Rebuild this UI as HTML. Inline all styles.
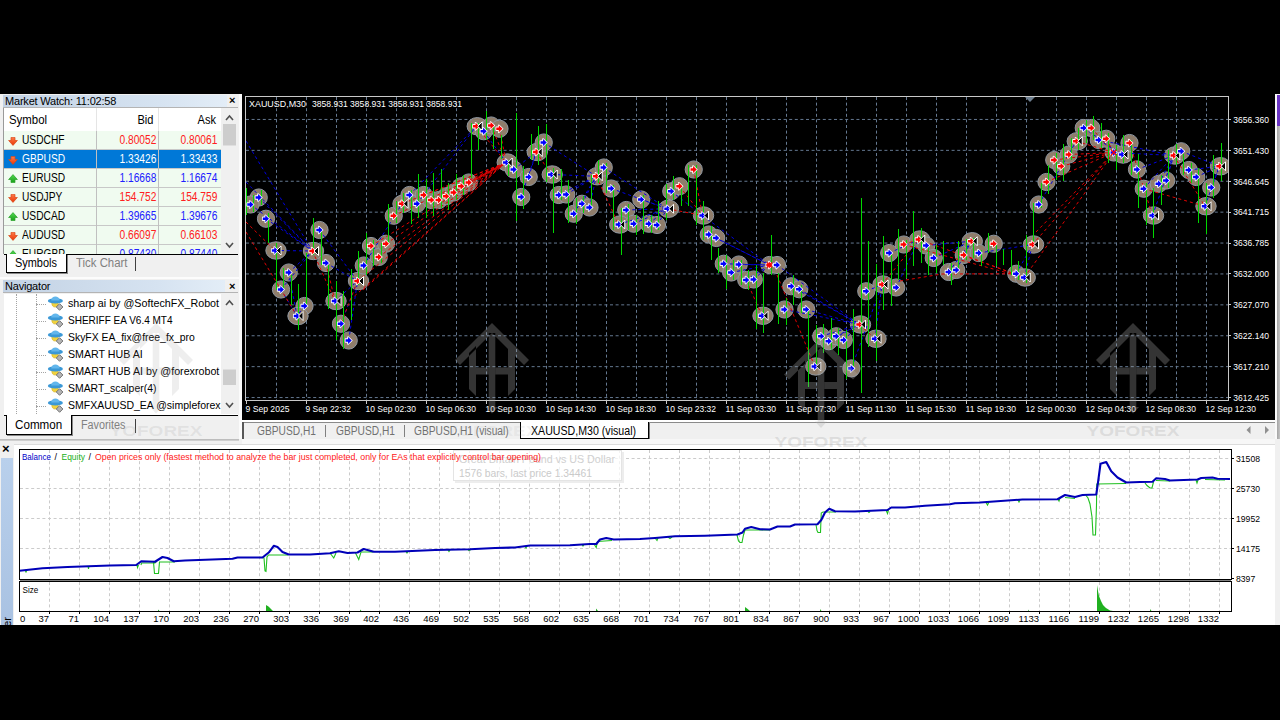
<!DOCTYPE html><html><head><meta charset="utf-8"><title>MetaTrader 4</title><style>
*{box-sizing:border-box;margin:0;padding:0}
html,body{width:1280px;height:720px;overflow:hidden;background:#000;font-family:"Liberation Sans",sans-serif;font-size:12px;color:#000}
.a{position:absolute}
#app{position:absolute;left:0;top:94px;width:1280px;height:531px;background:#f0f0f0;overflow:hidden}
.title{position:absolute;left:3px;height:13px;width:224px;letter-spacing:-0.2px;background:linear-gradient(90deg,#c3d2e4,#d6e3f1 70%,#e3edf7);font-size:11px;line-height:13px;padding-left:2px;color:#000;white-space:nowrap}
.cls{position:absolute;font-size:11px;font-weight:bold;line-height:12px}
.row{position:absolute;left:4px;width:217px;height:19px;background:#f0fbf0;border-bottom:1px solid #c8c8c8;font-size:12px;line-height:18px;white-space:nowrap}
.row span{position:absolute;top:0}
.row .s{left:18.3px}
.row .b{right:65px;text-align:right}
.row .k{right:4px;text-align:right}
.row i{position:absolute;top:0;width:1px;height:19px;background:#c0c0c0}
.up{color:#2020ff}.dn{color:#ff2020}
.sel{background:#0078d7;color:#fff}
span.sx,.sx{display:inline-block;transform:scaleX(.85);transform-origin:0 50%}
span.sxr,.sxr{display:inline-block;transform:scaleX(.85);transform-origin:100% 50%}
.tab{position:absolute;font-size:12px;line-height:16px;white-space:nowrap}
.nav{position:absolute;left:69px;font-size:11.5px;line-height:17px;white-space:nowrap;color:#000}
</style></head><body>
<div id="app">
<div class="a" style="left:0;top:0;width:242px;height:345px;background:#f0f0f0"></div>
<div class="a" style="left:239px;top:0;width:3px;height:345px;background:#fbfbfb"></div>
<div class="title" style="top:1px;height:12px;line-height:12px">Market Watch: 11:02:58</div>
<div class="a" style="left:3px;top:13px;width:235px;height:1px;background:#b4b4b4"></div>
<div class="cls" style="left:229px;top:0px">×</div>
<div class="a" style="left:4px;top:14px;width:217px;height:146px;background:#fff;overflow:hidden">
</div>
<div class="a" style="left:4px;top:14px;width:217px;height:23px;background:#fff;font-size:12px;line-height:24px"><span class="a sx" style="left:5px;transform:scaleX(.95)">Symbol</span><span class="a sxr" style="right:68px;transform:scaleX(.92)">Bid</span><span class="a sxr" style="right:4.5px;transform:scaleX(.92)">Ask</span><i class="a" style="left:92px;top:0;width:1px;height:23px;background:#e5e5e5"></i><i class="a" style="left:154px;top:0;width:1px;height:23px;background:#e5e5e5"></i></div>
<svg width="0" height="0" style="position:absolute"><defs><linearGradient id="gdn" x1="0" y1="0" x2="0" y2="1"><stop offset="0" stop-color="#ff7a48"/><stop offset="1" stop-color="#e83808"/></linearGradient><linearGradient id="gup" x1="0" y1="0" x2="0" y2="1"><stop offset="0" stop-color="#50d850"/><stop offset="1" stop-color="#18a018"/></linearGradient></defs></svg>
<div class="a" style="left:0;top:37px;width:242px;height:123px;overflow:hidden">
<div class="row" style="top:0px"><svg class="a" style="left:4px;top:5.5px" width="10" height="9" viewBox="0 0 10 9"><path d="M3 0.4h4v3.1h2.4L5 8.4 0.6 3.5H3z" fill="url(#gdn)" stroke="#d84818" stroke-width="0.7"/></svg><span class="s sx">USDCHF</span><span class="b sxr dn">0.80052</span><span class="k sxr dn">0.80061</span><i style="left:92px"></i><i style="left:154px"></i></div>
<div class="row sel" style="top:19px"><svg class="a" style="left:4px;top:5.5px" width="10" height="9" viewBox="0 0 10 9"><path d="M3 0.4h4v3.1h2.4L5 8.4 0.6 3.5H3z" fill="url(#gdn)" stroke="#d84818" stroke-width="0.7"/></svg><span class="s sx">GBPUSD</span><span class="b sxr">1.33426</span><span class="k sxr">1.33433</span><i style="left:92px"></i><i style="left:154px"></i></div>
<div class="row" style="top:38px"><svg class="a" style="left:4px;top:5px" width="10" height="9" viewBox="0 0 10 9"><path d="M3 8.6h4V5.5h2.4L5 0.6 0.6 5.5H3z" fill="url(#gup)" stroke="#28a028" stroke-width="0.7"/></svg><span class="s sx">EURUSD</span><span class="b sxr up">1.16668</span><span class="k sxr up">1.16674</span><i style="left:92px"></i><i style="left:154px"></i></div>
<div class="row" style="top:57px"><svg class="a" style="left:4px;top:5.5px" width="10" height="9" viewBox="0 0 10 9"><path d="M3 0.4h4v3.1h2.4L5 8.4 0.6 3.5H3z" fill="url(#gdn)" stroke="#d84818" stroke-width="0.7"/></svg><span class="s sx">USDJPY</span><span class="b sxr dn">154.752</span><span class="k sxr dn">154.759</span><i style="left:92px"></i><i style="left:154px"></i></div>
<div class="row" style="top:76px"><svg class="a" style="left:4px;top:5px" width="10" height="9" viewBox="0 0 10 9"><path d="M3 8.6h4V5.5h2.4L5 0.6 0.6 5.5H3z" fill="url(#gup)" stroke="#28a028" stroke-width="0.7"/></svg><span class="s sx">USDCAD</span><span class="b sxr up">1.39665</span><span class="k sxr up">1.39676</span><i style="left:92px"></i><i style="left:154px"></i></div>
<div class="row" style="top:95px"><svg class="a" style="left:4px;top:5.5px" width="10" height="9" viewBox="0 0 10 9"><path d="M3 0.4h4v3.1h2.4L5 8.4 0.6 3.5H3z" fill="url(#gdn)" stroke="#d84818" stroke-width="0.7"/></svg><span class="s sx">AUDUSD</span><span class="b sxr dn">0.66097</span><span class="k sxr dn">0.66103</span><i style="left:92px"></i><i style="left:154px"></i></div>
<div class="row" style="top:114px"><svg class="a" style="left:4px;top:5px" width="10" height="9" viewBox="0 0 10 9"><path d="M3 8.6h4V5.5h2.4L5 0.6 0.6 5.5H3z" fill="url(#gup)" stroke="#28a028" stroke-width="0.7"/></svg><span class="s sx">EURGBP</span><span class="b sxr up">0.87430</span><span class="k sxr up">0.87440</span><i style="left:92px"></i><i style="left:154px"></i></div>
</div>
<div class="a" style="left:3px;top:14px;width:1px;height:146px;background:#9a9a9a"></div>
<div class="a" style="left:221px;top:14px;width:17px;height:146px;background:#f0f0f0"></div>
<svg class="a" style="left:221px;top:14px" width="17" height="146"><path d="M5 12l3.5-4 3.5 4" fill="none" stroke="#505050" stroke-width="1.6"/><rect x="2" y="16" width="13" height="21.5" fill="#cdcdcd"/><path d="M5 135l3.5 4 3.5-4" fill="none" stroke="#505050" stroke-width="1.6"/></svg>
<div class="a" style="left:4px;top:160px;width:234px;height:1px;background:#000"></div>
<div class="a" style="left:6px;top:160px;width:61px;height:19px;background:#fff;border:1px solid #000;border-top:none;box-shadow:1px 1px 0 #888"></div>
<div class="tab" style="left:15px;top:161px"><span class="sx" style="transform:scaleX(.91)">Symbols</span></div>
<div class="tab" style="left:76px;top:161px;color:#808080"><span class="sx" style="transform:scaleX(.95)">Tick Chart</span></div>
<div class="a" style="left:135px;top:163px;width:1px;height:14px;background:#404040"></div>
<div class="a" style="left:0;top:183px;width:242px;height:2px;background:#fcfcfc"></div>
<div class="title" style="top:186px;height:12px;line-height:12px;width:222px">Navigator</div>
<div class="a" style="left:3px;top:198px;width:235px;height:1px;background:#b4b4b4"></div>
<div class="cls" style="left:229px;top:186px">×</div>
<div class="a" style="left:4px;top:200px;width:234px;height:121px;background:#fff;overflow:hidden">
<div class="a" style="left:12px;top:0;width:0;height:120px;border-left:1px dotted #a4a4a4"></div>
<div class="a" style="left:32px;top:0;width:0;height:120px;border-left:1px dotted #a4a4a4"></div>
<div class="a" style="left:32px;top:10px;width:10px;height:0;border-top:1px dotted #a4a4a4"></div>
<svg class="a" style="left:43px;top:1px" width="18" height="17" viewBox="0 0 18 17"><path d="M4.7 7.5h6.6c0 3-1.4 4.6-3.3 4.6s-3.3-1.6-3.3-4.6z" fill="#f2d23c" stroke="#c8a418" stroke-width="0.5"/><ellipse cx="8.4" cy="5.9" rx="7.5" ry="2.6" fill="#3b98d6"/><path d="M4.2 5.6c0-5.6 8.4-5.6 8.4 0z" fill="#62b6ec"/><path d="M9.3 12l3.3-3.3 3.3 3.3-3.3 3.3z" fill="#b4b4b4" stroke="#686868" stroke-width="0.9"/></svg>
<div class="nav" style="left:64px;top:1px;width:153px;overflow:hidden"><span class="sx" style="transform:scaleX(0.933)">sharp ai by @SoftechFX_Robot</span></div>
<div class="a" style="left:32px;top:27px;width:10px;height:0;border-top:1px dotted #a4a4a4"></div>
<svg class="a" style="left:43px;top:18px" width="18" height="17" viewBox="0 0 18 17"><path d="M4.7 7.5h6.6c0 3-1.4 4.6-3.3 4.6s-3.3-1.6-3.3-4.6z" fill="#f2d23c" stroke="#c8a418" stroke-width="0.5"/><ellipse cx="8.4" cy="5.9" rx="7.5" ry="2.6" fill="#3b98d6"/><path d="M4.2 5.6c0-5.6 8.4-5.6 8.4 0z" fill="#62b6ec"/><path d="M9.3 12l3.3-3.3 3.3 3.3-3.3 3.3z" fill="#b4b4b4" stroke="#686868" stroke-width="0.9"/></svg>
<div class="nav" style="left:64px;top:18px;width:153px;overflow:hidden"><span class="sx" style="transform:scaleX(0.87)">SHERIFF EA V6.4 MT4</span></div>
<div class="a" style="left:32px;top:44px;width:10px;height:0;border-top:1px dotted #a4a4a4"></div>
<svg class="a" style="left:43px;top:35px" width="18" height="17" viewBox="0 0 18 17"><path d="M4.7 7.5h6.6c0 3-1.4 4.6-3.3 4.6s-3.3-1.6-3.3-4.6z" fill="#f2d23c" stroke="#c8a418" stroke-width="0.5"/><ellipse cx="8.4" cy="5.9" rx="7.5" ry="2.6" fill="#3b98d6"/><path d="M4.2 5.6c0-5.6 8.4-5.6 8.4 0z" fill="#62b6ec"/><path d="M9.3 12l3.3-3.3 3.3 3.3-3.3 3.3z" fill="#b4b4b4" stroke="#686868" stroke-width="0.9"/></svg>
<div class="nav" style="left:64px;top:35px;width:153px;overflow:hidden"><span class="sx" style="transform:scaleX(0.905)">SkyFX EA_fix@free_fx_pro</span></div>
<div class="a" style="left:32px;top:61px;width:10px;height:0;border-top:1px dotted #a4a4a4"></div>
<svg class="a" style="left:43px;top:52px" width="18" height="17" viewBox="0 0 18 17"><path d="M4.7 7.5h6.6c0 3-1.4 4.6-3.3 4.6s-3.3-1.6-3.3-4.6z" fill="#f2d23c" stroke="#c8a418" stroke-width="0.5"/><ellipse cx="8.4" cy="5.9" rx="7.5" ry="2.6" fill="#3b98d6"/><path d="M4.2 5.6c0-5.6 8.4-5.6 8.4 0z" fill="#62b6ec"/><path d="M9.3 12l3.3-3.3 3.3 3.3-3.3 3.3z" fill="#b4b4b4" stroke="#686868" stroke-width="0.9"/></svg>
<div class="nav" style="left:64px;top:52px;width:153px;overflow:hidden"><span class="sx" style="transform:scaleX(0.925)">SMART HUB AI</span></div>
<div class="a" style="left:32px;top:78px;width:10px;height:0;border-top:1px dotted #a4a4a4"></div>
<svg class="a" style="left:43px;top:69px" width="18" height="17" viewBox="0 0 18 17"><path d="M4.7 7.5h6.6c0 3-1.4 4.6-3.3 4.6s-3.3-1.6-3.3-4.6z" fill="#f2d23c" stroke="#c8a418" stroke-width="0.5"/><ellipse cx="8.4" cy="5.9" rx="7.5" ry="2.6" fill="#3b98d6"/><path d="M4.2 5.6c0-5.6 8.4-5.6 8.4 0z" fill="#62b6ec"/><path d="M9.3 12l3.3-3.3 3.3 3.3-3.3 3.3z" fill="#b4b4b4" stroke="#686868" stroke-width="0.9"/></svg>
<div class="nav" style="left:64px;top:69px;width:153px;overflow:hidden"><span class="sx" style="transform:scaleX(0.93)">SMART HUB AI by @forexrobot</span></div>
<div class="a" style="left:32px;top:95px;width:10px;height:0;border-top:1px dotted #a4a4a4"></div>
<svg class="a" style="left:43px;top:86px" width="18" height="17" viewBox="0 0 18 17"><path d="M4.7 7.5h6.6c0 3-1.4 4.6-3.3 4.6s-3.3-1.6-3.3-4.6z" fill="#f2d23c" stroke="#c8a418" stroke-width="0.5"/><ellipse cx="8.4" cy="5.9" rx="7.5" ry="2.6" fill="#3b98d6"/><path d="M4.2 5.6c0-5.6 8.4-5.6 8.4 0z" fill="#62b6ec"/><path d="M9.3 12l3.3-3.3 3.3 3.3-3.3 3.3z" fill="#b4b4b4" stroke="#686868" stroke-width="0.9"/></svg>
<div class="nav" style="left:64px;top:86px;width:153px;overflow:hidden"><span class="sx" style="transform:scaleX(0.906)">SMART_scalper(4)</span></div>
<div class="a" style="left:32px;top:112px;width:10px;height:0;border-top:1px dotted #a4a4a4"></div>
<svg class="a" style="left:43px;top:103px" width="18" height="17" viewBox="0 0 18 17"><path d="M4.7 7.5h6.6c0 3-1.4 4.6-3.3 4.6s-3.3-1.6-3.3-4.6z" fill="#f2d23c" stroke="#c8a418" stroke-width="0.5"/><ellipse cx="8.4" cy="5.9" rx="7.5" ry="2.6" fill="#3b98d6"/><path d="M4.2 5.6c0-5.6 8.4-5.6 8.4 0z" fill="#62b6ec"/><path d="M9.3 12l3.3-3.3 3.3 3.3-3.3 3.3z" fill="#b4b4b4" stroke="#686868" stroke-width="0.9"/></svg>
<div class="nav" style="left:64px;top:103px;width:153px;overflow:hidden"><span class="sx" style="transform:scaleX(0.914)">SMFXAUUSD_EA @simpleforex</span></div>
<div class="a" style="left:32px;top:129px;width:10px;height:0;border-top:1px dotted #a4a4a4"></div>
<svg class="a" style="left:43px;top:120px" width="18" height="17" viewBox="0 0 18 17"><path d="M4.7 7.5h6.6c0 3-1.4 4.6-3.3 4.6s-3.3-1.6-3.3-4.6z" fill="#f2d23c" stroke="#c8a418" stroke-width="0.5"/><ellipse cx="8.4" cy="5.9" rx="7.5" ry="2.6" fill="#3b98d6"/><path d="M4.2 5.6c0-5.6 8.4-5.6 8.4 0z" fill="#62b6ec"/><path d="M9.3 12l3.3-3.3 3.3 3.3-3.3 3.3z" fill="#b4b4b4" stroke="#686868" stroke-width="0.9"/></svg>
<div class="a" style="left:217px;top:0;width:17px;height:120px;background:#f0f0f0"></div>
<svg class="a" style="left:217px;top:0" width="17" height="120"><path d="M5 11l3.5-4 3.5 4" fill="none" stroke="#505050" stroke-width="1.6"/><rect x="2" y="75.5" width="13" height="15.5" fill="#cdcdcd"/><path d="M5 109l3.5 4 3.5-4" fill="none" stroke="#505050" stroke-width="1.6"/></svg>
</div>
<div class="a" style="left:4px;top:321px;width:234px;height:1px;background:#000"></div>
<div class="a" style="left:6px;top:321px;width:66px;height:20px;background:#fff;border:1px solid #000;border-top:none;box-shadow:1px 1px 0 #888"></div>
<div class="tab" style="left:15px;top:323px"><span class="sx" style="transform:scaleX(.97)">Common</span></div>
<div class="tab" style="left:81px;top:323px;color:#808080"><span class="sx" style="transform:scaleX(.9)">Favorites</span></div>
<div class="a" style="left:135px;top:325px;width:1px;height:14px;background:#404040"></div>
<div class="a" style="left:242px;top:0;width:1033px;height:326px;background:#000"></div>
<div class="a" style="left:1275px;top:0;width:5px;height:345px;background:#fafafa"></div>
<div class="a" style="left:1277px;top:1px;width:3px;height:31px;background:#6a34c4"></div>
<div class="a" style="left:1277px;top:32px;width:3px;height:313px;background:linear-gradient(90deg,#a4a4a4,#c4c4c4)"></div>
<div class="a" style="left:242px;top:326px;width:1033px;height:2px;background:#fff"></div>
<div class="a" style="left:243px;top:328px;width:1032px;height:1px;background:#8a8a8a"></div>
<div class="a" style="left:242px;top:329px;width:1033px;height:16px;background:#f0f0f0"></div>
<div class="a" style="left:242px;top:328px;width:1.5px;height:17px;background:#585858"></div>
<div class="tab" style="left:257px;top:329px;color:#707070"><span class="sx" style="transform:scaleX(.85)">GBPUSD,H1</span></div>
<div class="a" style="left:325px;top:331px;width:1px;height:12px;background:#808080"></div>
<div class="tab" style="left:336px;top:329px;color:#707070"><span class="sx" style="transform:scaleX(.85)">GBPUSD,H1</span></div>
<div class="a" style="left:404px;top:331px;width:1px;height:12px;background:#808080"></div>
<div class="tab" style="left:414px;top:329px;color:#707070"><span class="sx" style="transform:scaleX(.85)">GBPUSD,H1 (visual)</span></div>
<div class="a" style="left:520px;top:328px;width:129px;height:17px;background:#fff;border:1px solid #000;border-top:none;box-shadow:1px 1px 0 #777"></div>
<div class="tab" style="left:531px;top:329px;color:#000"><span class="sx" style="transform:scaleX(.885)">XAUUSD,M30 (visual)</span></div>
<svg class="a" style="left:1240px;top:330px" width="30" height="12"><path d="M10.5 2v8L6.5 6z" fill="#909090"/><path d="M25 2v8l4-4z" fill="#909090"/></svg>
<div class="a" style="left:0;top:345px;width:1280px;height:6px;background:#f0f0f0"></div>
<div class="a" style="left:0;top:345px;width:239px;height:2px;background:linear-gradient(180deg,#b4b4b4,#d8d8d8)"></div>
<div class="a" style="left:242px;top:345px;width:1033px;height:5px;background:#f7f7f7"></div>
<div class="a" style="left:0;top:350px;width:1280px;height:181px;background:#f0f0f0"></div>
<div class="a" style="left:14px;top:350px;width:1261px;height:181px;background:#fff;border-top:1px solid #dcdcdc"></div>
<div class="a" style="left:1px;top:364px;width:12px;height:167px;background:linear-gradient(180deg,#b9d0ec,#a9c2e2)"></div>
<div class="cls" style="left:2px;top:349px;font-size:13px">×</div>
</div>
<svg class="a" style="left:0;top:0;pointer-events:none" width="1280" height="720" viewBox="0 0 1280 720" font-family="Liberation Sans, sans-serif">
<g stroke="#647890" stroke-width="1" stroke-dasharray="3 2.6">
<path d="M276.5 97V400"/>
<path d="M306.5 97V400"/>
<path d="M336.5 97V400"/>
<path d="M366.5 97V400"/>
<path d="M396.5 97V400"/>
<path d="M426.5 97V400"/>
<path d="M456.5 97V400"/>
<path d="M486.5 97V400"/>
<path d="M516.5 97V400"/>
<path d="M546.5 97V400"/>
<path d="M576.5 97V400"/>
<path d="M606.5 97V400"/>
<path d="M636.5 97V400"/>
<path d="M666.5 97V400"/>
<path d="M696.5 97V400"/>
<path d="M726.5 97V400"/>
<path d="M756.5 97V400"/>
<path d="M786.5 97V400"/>
<path d="M816.5 97V400"/>
<path d="M846.5 97V400"/>
<path d="M876.5 97V400"/>
<path d="M906.5 97V400"/>
<path d="M936.5 97V400"/>
<path d="M966.5 97V400"/>
<path d="M996.5 97V400"/>
<path d="M1026.5 97V400"/>
<path d="M1056.5 97V400"/>
<path d="M1086.5 97V400"/>
<path d="M1116.5 97V400"/>
<path d="M1146.5 97V400"/>
<path d="M1176.5 97V400"/>
<path d="M1206.5 97V400"/>
<path d="M246 119.45H1228"/>
<path d="M246 150.35H1228"/>
<path d="M246 181.25H1228"/>
<path d="M246 212.15H1228"/>
<path d="M246 243.05H1228"/>
<path d="M246 273.95H1228"/>
<path d="M246 304.85H1228"/>
<path d="M246 335.75H1228"/>
<path d="M246 366.65H1228"/>
<path d="M246 397.55H1228"/>
</g>
<rect x="245.5" y="96.5" width="983" height="304" fill="none" stroke="#c8c8c8" stroke-width="1" shape-rendering="crispEdges"/>
<g stroke="#c8c8c8" stroke-width="1" shape-rendering="crispEdges">
<path d="M1229 119.5h2"/>
<path d="M1229 150.5h2"/>
<path d="M1229 181.5h2"/>
<path d="M1229 212.5h2"/>
<path d="M1229 243.5h2"/>
<path d="M1229 273.5h2"/>
<path d="M1229 304.5h2"/>
<path d="M1229 335.5h2"/>
<path d="M1229 366.5h2"/>
<path d="M1229 397.5h2"/>
<path d="M246.5 401v3"/>
<path d="M306.5 401v3"/>
<path d="M366.5 401v3"/>
<path d="M426.5 401v3"/>
<path d="M486.5 401v3"/>
<path d="M546.5 401v3"/>
<path d="M606.5 401v3"/>
<path d="M666.5 401v3"/>
<path d="M726.5 401v3"/>
<path d="M786.5 401v3"/>
<path d="M846.5 401v3"/>
<path d="M906.5 401v3"/>
<path d="M966.5 401v3"/>
<path d="M1026.5 401v3"/>
<path d="M1086.5 401v3"/>
<path d="M1146.5 401v3"/>
<path d="M1206.5 401v3"/>
</g>
<g fill="#fff" font-size="9.5px">
<text x="1233.3" y="122.75" textLength="35.6" lengthAdjust="spacingAndGlyphs">3656.360</text>
<text x="1233.3" y="153.65" textLength="35.6" lengthAdjust="spacingAndGlyphs">3651.430</text>
<text x="1233.3" y="184.55" textLength="35.6" lengthAdjust="spacingAndGlyphs">3646.645</text>
<text x="1233.3" y="215.45" textLength="35.6" lengthAdjust="spacingAndGlyphs">3641.715</text>
<text x="1233.3" y="246.35" textLength="35.6" lengthAdjust="spacingAndGlyphs">3636.785</text>
<text x="1233.3" y="277.25" textLength="35.6" lengthAdjust="spacingAndGlyphs">3632.000</text>
<text x="1233.3" y="308.15" textLength="35.6" lengthAdjust="spacingAndGlyphs">3627.070</text>
<text x="1233.3" y="339.05" textLength="35.6" lengthAdjust="spacingAndGlyphs">3622.140</text>
<text x="1233.3" y="369.95" textLength="35.6" lengthAdjust="spacingAndGlyphs">3617.210</text>
<text x="1233.3" y="400.85" textLength="35.6" lengthAdjust="spacingAndGlyphs">3612.425</text>
</g>
<g fill="#fff" font-size="9.5px">
<text x="245.5" y="412.3" textLength="44" lengthAdjust="spacingAndGlyphs">9 Sep 2025</text>
<text x="305.5" y="412.3" textLength="45.5" lengthAdjust="spacingAndGlyphs">9 Sep 22:32</text>
<text x="365.5" y="412.3" textLength="50.5" lengthAdjust="spacingAndGlyphs">10 Sep 02:30</text>
<text x="425.5" y="412.3" textLength="50.5" lengthAdjust="spacingAndGlyphs">10 Sep 06:30</text>
<text x="485.5" y="412.3" textLength="50.5" lengthAdjust="spacingAndGlyphs">10 Sep 10:30</text>
<text x="545.5" y="412.3" textLength="50.5" lengthAdjust="spacingAndGlyphs">10 Sep 14:30</text>
<text x="605.5" y="412.3" textLength="50.5" lengthAdjust="spacingAndGlyphs">10 Sep 18:30</text>
<text x="665.5" y="412.3" textLength="50.5" lengthAdjust="spacingAndGlyphs">10 Sep 23:32</text>
<text x="725.5" y="412.3" textLength="50.5" lengthAdjust="spacingAndGlyphs">11 Sep 03:30</text>
<text x="785.5" y="412.3" textLength="50.5" lengthAdjust="spacingAndGlyphs">11 Sep 07:30</text>
<text x="845.5" y="412.3" textLength="50.5" lengthAdjust="spacingAndGlyphs">11 Sep 11:30</text>
<text x="905.5" y="412.3" textLength="50.5" lengthAdjust="spacingAndGlyphs">11 Sep 15:30</text>
<text x="965.5" y="412.3" textLength="50.5" lengthAdjust="spacingAndGlyphs">11 Sep 19:30</text>
<text x="1025.5" y="412.3" textLength="50.5" lengthAdjust="spacingAndGlyphs">12 Sep 00:30</text>
<text x="1085.5" y="412.3" textLength="50.5" lengthAdjust="spacingAndGlyphs">12 Sep 04:30</text>
<text x="1145.5" y="412.3" textLength="50.5" lengthAdjust="spacingAndGlyphs">12 Sep 08:30</text>
<text x="1205.5" y="412.3" textLength="50.5" lengthAdjust="spacingAndGlyphs">12 Sep 12:30</text>
</g>
<text x="249" y="107" fill="#fff" font-size="9.5px" textLength="57" lengthAdjust="spacingAndGlyphs">XAUUSD,M30</text>
<text x="312" y="107" fill="#fff" font-size="9.5px" textLength="150" lengthAdjust="spacingAndGlyphs">3858.931 3858.931 3858.931 3858.931</text>
<path d="M1025 97h10l-5 5z" fill="#6e7f90"/>
<clipPath id="cc"><rect x="246" y="97" width="982" height="303"/></clipPath><g clip-path="url(#cc)">
<g fill="#8f7d6b" stroke="#9098a2" stroke-width="1">
<circle cx="258.75" cy="197.5" r="8.6"/>
<circle cx="250.5" cy="204.5" r="8.6"/>
<circle cx="266" cy="218.75" r="8.6"/>
<circle cx="319.5" cy="230" r="8.6"/>
<ellipse cx="276" cy="250.5" rx="10.2" ry="8.7"/>
<ellipse cx="313.5" cy="251" rx="10.2" ry="8.7"/>
<circle cx="326" cy="263" r="8.6"/>
<circle cx="288.75" cy="272.5" r="8.6"/>
<circle cx="281" cy="289.5" r="8.6"/>
<circle cx="304.5" cy="306" r="8.6"/>
<ellipse cx="298" cy="316" rx="10.2" ry="8.7"/>
<ellipse cx="336" cy="301" rx="10.2" ry="8.7"/>
<circle cx="341" cy="323.75" r="8.6"/>
<circle cx="348.75" cy="340.5" r="8.6"/>
<ellipse cx="358.5" cy="281" rx="10.2" ry="8.7"/>
<circle cx="363.75" cy="265.5" r="8.6"/>
<circle cx="371" cy="246" r="8.6"/>
<circle cx="378.75" cy="257" r="8.6"/>
<circle cx="386" cy="243.75" r="8.6"/>
<circle cx="393.75" cy="215.75" r="8.6"/>
<ellipse cx="403" cy="203.75" rx="10.2" ry="8.7"/>
<circle cx="409.5" cy="195" r="8.6"/>
<circle cx="417" cy="203.75" r="8.6"/>
<circle cx="423.75" cy="195" r="8.6"/>
<circle cx="431.25" cy="200" r="8.6"/>
<circle cx="438.75" cy="200" r="8.6"/>
<circle cx="446.25" cy="196.25" r="8.6"/>
<circle cx="453.75" cy="192.5" r="8.6"/>
<circle cx="461.25" cy="186.25" r="8.6"/>
<circle cx="468.75" cy="182.5" r="8.6"/>
<ellipse cx="477.25" cy="126.25" rx="10.2" ry="8.7"/>
<circle cx="483.75" cy="131.25" r="8.6"/>
<circle cx="491.25" cy="125.5" r="8.6"/>
<circle cx="499.5" cy="128.75" r="8.6"/>
<ellipse cx="507.25" cy="162.5" rx="10.2" ry="8.7"/>
<circle cx="513.75" cy="169.5" r="8.6"/>
<circle cx="528.75" cy="177" r="8.6"/>
<circle cx="521.25" cy="197" r="8.6"/>
<ellipse cx="537.25" cy="152" rx="10.2" ry="8.7"/>
<circle cx="543.75" cy="142.5" r="8.6"/>
<ellipse cx="552.25" cy="174.5" rx="10.2" ry="8.7"/>
<circle cx="558.75" cy="195" r="8.6"/>
<circle cx="566.25" cy="194.5" r="8.6"/>
<circle cx="573.75" cy="213.75" r="8.6"/>
<circle cx="582" cy="203.75" r="8.6"/>
<circle cx="589.5" cy="207.5" r="8.6"/>
<ellipse cx="597.25" cy="176.25" rx="10.2" ry="8.7"/>
<circle cx="603.75" cy="167.5" r="8.6"/>
<circle cx="611.25" cy="188.5" r="8.6"/>
<circle cx="641.25" cy="199.5" r="8.6"/>
<circle cx="626.25" cy="210" r="8.6"/>
<ellipse cx="619.75" cy="224.5" rx="10.2" ry="8.7"/>
<circle cx="633.75" cy="223.75" r="8.6"/>
<circle cx="648.75" cy="223.75" r="8.6"/>
<circle cx="657" cy="225" r="8.6"/>
<ellipse cx="668.5" cy="208.75" rx="10.2" ry="8.7"/>
<circle cx="671.25" cy="191.25" r="8.6"/>
<circle cx="679.5" cy="186.25" r="8.6"/>
<circle cx="693.75" cy="169.5" r="8.6"/>
<ellipse cx="703.5" cy="215.5" rx="10.2" ry="8.7"/>
<circle cx="708.75" cy="234.5" r="8.6"/>
<circle cx="716.25" cy="238" r="8.6"/>
<circle cx="723.75" cy="263.75" r="8.6"/>
<circle cx="731.25" cy="272.5" r="8.6"/>
<circle cx="738.75" cy="264.5" r="8.6"/>
<circle cx="746.25" cy="280" r="8.6"/>
<circle cx="753.75" cy="279.5" r="8.6"/>
<circle cx="769.5" cy="265" r="8.6"/>
<circle cx="777" cy="265" r="8.6"/>
<circle cx="791.25" cy="286.25" r="8.6"/>
<circle cx="799.25" cy="289.25" r="8.6"/>
<ellipse cx="763" cy="315.75" rx="10.2" ry="8.7"/>
<circle cx="784.5" cy="309.5" r="8.6"/>
<circle cx="806.25" cy="309.5" r="8.6"/>
<circle cx="821.25" cy="336.25" r="8.6"/>
<circle cx="828.75" cy="341.25" r="8.6"/>
<circle cx="836.25" cy="336.25" r="8.6"/>
<circle cx="843.75" cy="340" r="8.6"/>
<ellipse cx="860.5" cy="324.5" rx="10.2" ry="8.7"/>
<ellipse cx="876" cy="338.75" rx="10.2" ry="8.7"/>
<ellipse cx="815.8" cy="366.5" rx="10.2" ry="8.7"/>
<circle cx="851.4" cy="368.4" r="8.6"/>
<circle cx="866.25" cy="291.25" r="8.6"/>
<ellipse cx="883" cy="284.5" rx="10.2" ry="8.7"/>
<circle cx="896.25" cy="287.5" r="8.6"/>
<circle cx="889.25" cy="253" r="8.6"/>
<circle cx="903.75" cy="244.5" r="8.6"/>
<ellipse cx="919.75" cy="239.5" rx="10.2" ry="8.7"/>
<circle cx="926.25" cy="245.5" r="8.6"/>
<circle cx="933.75" cy="258" r="8.6"/>
<circle cx="948.75" cy="272" r="8.6"/>
<circle cx="956.25" cy="270" r="8.6"/>
<circle cx="963.75" cy="255" r="8.6"/>
<ellipse cx="972.25" cy="241.25" rx="10.2" ry="8.7"/>
<circle cx="978.75" cy="253" r="8.6"/>
<circle cx="993.75" cy="243.75" r="8.6"/>
<circle cx="1016.25" cy="273.75" r="8.6"/>
<ellipse cx="1025.25" cy="277.5" rx="10.2" ry="8.7"/>
<ellipse cx="1033.5" cy="244.5" rx="10.2" ry="8.7"/>
<circle cx="1038.75" cy="204.5" r="8.6"/>
<circle cx="1046.5" cy="182" r="8.6"/>
<circle cx="1054.25" cy="160" r="8.6"/>
<circle cx="1061.25" cy="166.25" r="8.6"/>
<circle cx="1068.75" cy="154.5" r="8.6"/>
<ellipse cx="1077.25" cy="141.25" rx="10.2" ry="8.7"/>
<circle cx="1083.75" cy="128" r="8.6"/>
<circle cx="1091.25" cy="128" r="8.6"/>
<circle cx="1098.75" cy="140" r="8.6"/>
<circle cx="1106.25" cy="138.75" r="8.6"/>
<circle cx="1113.75" cy="152.5" r="8.6"/>
<ellipse cx="1123" cy="154.5" rx="10.2" ry="8.7"/>
<circle cx="1129.5" cy="143" r="8.6"/>
<circle cx="1137" cy="169.5" r="8.6"/>
<circle cx="1143.75" cy="188.75" r="8.6"/>
<ellipse cx="1153.5" cy="215.5" rx="10.2" ry="8.7"/>
<circle cx="1158.75" cy="183.75" r="8.6"/>
<circle cx="1166.25" cy="180.5" r="8.6"/>
<ellipse cx="1174.75" cy="155.5" rx="10.2" ry="8.7"/>
<circle cx="1181.25" cy="151.25" r="8.6"/>
<circle cx="1188.75" cy="170" r="8.6"/>
<circle cx="1196.25" cy="177" r="8.6"/>
<ellipse cx="1206" cy="206.25" rx="10.2" ry="8.7"/>
<circle cx="1211.25" cy="187.5" r="8.6"/>
<ellipse cx="1220.5" cy="166.25" rx="10.2" ry="8.7"/>
</g>
<g fill="none" stroke-width="1" stroke-dasharray="3 3">
<path stroke="#0000e0" d="M246 141L312.5 251M246 182L312.5 251M258.75 197.5L312.5 251M250.5 204.5L312.5 251M266 218.75L312.5 251M275 250.5L312.5 251M319.5 230L357.5 281M326 263L357.5 281M335 301L357.5 281M341 323.75L357.5 281M348.75 340.5L357.5 281M288.75 272.5L297 316M281 289.5L297 316M304.5 306L297 316M288.75 272.5L312.5 251M281 289.5L312.5 251M363.75 265.5L402 203.75M409.5 195L476.25 126.25M417 203.75L476.25 126.25M483.75 131.25L506.25 162.5M513.75 169.5L536.25 152M521.25 197L536.25 152M528.75 177L536.25 152M543.75 142.5L596.25 176.25M558.75 195L596.25 176.25M566.25 194.5L596.25 176.25M573.75 213.75L596.25 176.25M582 203.75L596.25 176.25M589.5 207.5L596.25 176.25M551.25 174.5L596.25 176.25M603.75 167.5L667.5 208.75M611.25 188.5L667.5 208.75M641.25 199.5L667.5 208.75M626.25 210L667.5 208.75M633.75 223.75L667.5 208.75M648.75 223.75L667.5 208.75M657 225L667.5 208.75M618.75 224.5L667.5 208.75M671.25 191.25L702.5 215.5M702.5 215.5L769.5 265M708.75 234.5L769.5 265M716.25 238L769.5 265M723.75 263.75L769.5 265M731.25 272.5L769.5 265M738.75 264.5L769.5 265M746.25 280L769.5 265M753.75 279.5L769.5 265M777 265L859.5 324.5M791.25 286.25L859.5 324.5M799.25 289.25L859.5 324.5M784.5 309.5L859.5 324.5M806.25 309.5L859.5 324.5M821.25 336.25L859.5 324.5M828.75 341.25L859.5 324.5M836.25 336.25L859.5 324.5M843.75 340L859.5 324.5M851.4 368.4L882 284.5M866.25 291.25L882 284.5M875 338.75L882 284.5M889.25 253L918.75 239.5M896.25 287.5L918.75 239.5M926.25 245.5L971.25 241.25M933.75 258L971.25 241.25M948.75 272L971.25 241.25M956.25 270L971.25 241.25M978.75 253L1032.5 244.5M1016.25 273.75L1032.5 244.5M1024.25 277.5L1032.5 244.5M1038.75 204.5L1076.25 141.25M1083.75 128L1122 154.5M1098.75 140L1122 154.5M1098.75 140L1173.75 155.5M1113.75 152.5L1173.75 155.5M1137 169.5L1173.75 155.5M1143.75 188.75L1173.75 155.5M1158.75 183.75L1173.75 155.5M1166.25 180.5L1173.75 155.5M1152.5 215.5L1173.75 155.5M1181.25 151.25L1219.5 166.25M1188.75 170L1219.5 166.25M1196.25 177L1219.5 166.25M1211.25 187.5L1219.5 166.25M1205 206.25L1219.5 166.25"/>
<path stroke="#e00000" d="M246 222L275 250.5M246 232L297 316M312.5 251L335 301M326 263L335 301M357.5 281L341 323.75M371 246L506.25 162.5M378.75 257L506.25 162.5M386 243.75L506.25 162.5M393.75 215.75L506.25 162.5M402 203.75L506.25 162.5M423.75 195L506.25 162.5M431.25 200L506.25 162.5M438.75 200L506.25 162.5M446.25 196.25L506.25 162.5M453.75 192.5L506.25 162.5M461.25 186.25L506.25 162.5M468.75 182.5L506.25 162.5M357.5 281L503 165M363 290L503 165M350 300L503 165M491.25 125.5L506.25 162.5M499.5 128.75L506.25 162.5M476.25 126.25L506.25 162.5M536.25 152L551.25 174.5M596.25 176.25L618.75 224.5M679.5 186.25L702.5 215.5M693.75 169.5L702.5 215.5M667.5 208.75L702.5 215.5M746.25 280L762 315.75M777 275L814.8 366.5M859.5 324.5L875 338.75M882 284.5L918.75 239.5M903.75 244.5L918.75 239.5M903.75 244.5L1024.25 277.5M918.75 239.5L1024.25 277.5M963.75 255L1024.25 277.5M1032.5 244.5L1113.75 152.5M1024.25 277.5L1113.75 152.5M1036 232L1113.75 152.5M900 281L942 274M942 274L1016.25 273.75M1046.5 182L1113.75 152.5M1054.25 160L1113.75 152.5M1061.25 166.25L1113.75 152.5M1068.75 154.5L1113.75 152.5M1076.25 141.25L1113.75 152.5M1091.25 128L1113.75 152.5M1106.25 138.75L1113.75 152.5M1129.5 143L1152.5 215.5M1143.75 188.75L1205 206.25M1173.75 155.5L1205 206.25"/>
</g>
<path stroke="#00d800" stroke-width="1" fill="none" shape-rendering="crispEdges" d="M246.5 187.5V215M253.5 195V212M261.5 190V205M268.5 212.5V242.5M276.5 242.5V290M283.5 267.5V290M291.5 275V305M298.5 284V330M306.5 252.5V305M313.5 217.5V255M321.5 227.5V265M328.5 265V309M336.5 281V340M343.5 291V349M351.5 269V320M358.5 251V285M366.5 232.5V275M373.5 240V266M381.5 242.5V262.5M388.5 204V245M396.5 201V222.5M403.5 192.5V212.5M411.5 190V224M418.5 174V218M426.5 179V217.5M433.5 172.5V216M441.5 168.75V207.5M448.5 182.5V210M456.5 173.75V200M463.5 175V195M471.5 122.5V177.5M478.5 122.5V150M486.5 111V140M493.5 125V148.75M501.5 135V158.75M508.5 160V176M516.5 112.5V221M523.5 166V209M531.5 134V160M538.5 126V165M546.5 124V182M553.5 167.5V232.5M561.5 169V200M568.5 180V222.5M576.5 197.5V224M583.5 196V212.5M591.5 175V210M598.5 160V182.5M606.5 162.5V192.5M613.5 185V230M621.5 207.5V255M628.5 204V230M636.5 215V235M643.5 195V234M651.5 215V232.5M658.5 201V230M666.5 184V220M673.5 176V200M681.5 184V206M688.5 165V206M696.5 165V225M703.5 201V240M711.5 226V260M718.5 247.5V272.5M726.5 255V289M733.5 260V280M741.5 260V285M748.5 270V290M756.5 265V328.75M763.5 272.5V332.5M771.5 235V275M778.5 272.5V323.75M786.5 297.5V325M793.5 275V305M801.5 285V312.5M808.5 309.7V386.5M816.5 325V368M823.5 324V352.5M831.5 317.5V350M838.5 327.5V355M846.5 330V378.7M853.5 309V366M861.5 197.5V393M868.5 241V346.6M876.5 264V361M883.5 236V310M891.5 252.5V306M898.5 229V280M906.5 240V277.5M913.5 211V266M921.5 227.5V262.5M928.5 245V275M936.5 245V272.5M943.5 241V265M951.5 262.5V285M958.5 241V270M966.5 238.75V260M973.5 237.5V257.5M981.5 250V266M988.5 232.5V252.5M996.5 245V266M1003.5 248.75V265M1011.5 250V275M1018.5 261V280M1026.5 235V282.5M1033.5 202.5V245M1041.5 182.5V207.5M1048.5 165V193.75M1056.5 152.5V180M1063.5 143.75V181.25M1071.5 137.5V160M1078.5 127.5V150M1086.5 120V142.5M1093.5 116V140M1101.5 122.5V147.5M1108.5 132.5V162.5M1116.5 145V170M1123.5 135V162.5M1131.5 140V175M1138.5 153.75V207.5M1146.5 182.5V225M1153.5 187.5V237.5M1161.5 175V205M1168.5 150V187.5M1176.5 143.75V165M1183.5 153.75V175M1191.5 162.5V182.5M1198.5 167.5V222.5M1206.5 182.5V233.75M1213.5 155V197.5M1221.5 142.5V181.25"/>
<path d="M255.55 196.2h2.5v-2.2l3.7 3.5-3.7 3.5v-2.2h-2.5z" fill="#0000ff" stroke="#fff" stroke-width="1.7" stroke-linejoin="round" paint-order="stroke"/>
<path d="M247.3 203.2h2.5v-2.2l3.7 3.5-3.7 3.5v-2.2h-2.5z" fill="#0000ff" stroke="#fff" stroke-width="1.7" stroke-linejoin="round" paint-order="stroke"/>
<path d="M262.8 217.45h2.5v-2.2l3.7 3.5-3.7 3.5v-2.2h-2.5z" fill="#0000ff" stroke="#fff" stroke-width="1.7" stroke-linejoin="round" paint-order="stroke"/>
<path d="M316.3 228.7h2.5v-2.2l3.7 3.5-3.7 3.5v-2.2h-2.5z" fill="#0000ff" stroke="#fff" stroke-width="1.7" stroke-linejoin="round" paint-order="stroke"/>
<path d="M271.8 249.2h2.5v-2.2l3.7 3.5-3.7 3.5v-2.2h-2.5z" fill="#0000ff" stroke="#fff" stroke-width="1.7" stroke-linejoin="round" paint-order="stroke"/>
<path d="M276.5 250.5l4.5-4.5v9z" fill="#000" stroke="#fff" stroke-width="1"/>
<path d="M309.3 249.7h2.5v-2.2l3.7 3.5-3.7 3.5v-2.2h-2.5z" fill="#ff0000" stroke="#fff" stroke-width="1.7" stroke-linejoin="round" paint-order="stroke"/>
<path d="M314 251l4.5-4.5v9z" fill="#000" stroke="#fff" stroke-width="1"/>
<path d="M322.8 261.7h2.5v-2.2l3.7 3.5-3.7 3.5v-2.2h-2.5z" fill="#0000ff" stroke="#fff" stroke-width="1.7" stroke-linejoin="round" paint-order="stroke"/>
<path d="M285.55 271.2h2.5v-2.2l3.7 3.5-3.7 3.5v-2.2h-2.5z" fill="#0000ff" stroke="#fff" stroke-width="1.7" stroke-linejoin="round" paint-order="stroke"/>
<path d="M277.8 288.2h2.5v-2.2l3.7 3.5-3.7 3.5v-2.2h-2.5z" fill="#0000ff" stroke="#fff" stroke-width="1.7" stroke-linejoin="round" paint-order="stroke"/>
<path d="M301.3 304.7h2.5v-2.2l3.7 3.5-3.7 3.5v-2.2h-2.5z" fill="#0000ff" stroke="#fff" stroke-width="1.7" stroke-linejoin="round" paint-order="stroke"/>
<path d="M293.8 314.7h2.5v-2.2l3.7 3.5-3.7 3.5v-2.2h-2.5z" fill="#0000ff" stroke="#fff" stroke-width="1.7" stroke-linejoin="round" paint-order="stroke"/>
<path d="M298.5 316l4.5-4.5v9z" fill="#000" stroke="#fff" stroke-width="1"/>
<path d="M331.8 299.7h2.5v-2.2l3.7 3.5-3.7 3.5v-2.2h-2.5z" fill="#0000ff" stroke="#fff" stroke-width="1.7" stroke-linejoin="round" paint-order="stroke"/>
<path d="M336.5 301l4.5-4.5v9z" fill="#000" stroke="#fff" stroke-width="1"/>
<path d="M337.8 322.45h2.5v-2.2l3.7 3.5-3.7 3.5v-2.2h-2.5z" fill="#0000ff" stroke="#fff" stroke-width="1.7" stroke-linejoin="round" paint-order="stroke"/>
<path d="M345.55 339.2h2.5v-2.2l3.7 3.5-3.7 3.5v-2.2h-2.5z" fill="#0000ff" stroke="#fff" stroke-width="1.7" stroke-linejoin="round" paint-order="stroke"/>
<path d="M354.3 279.7h2.5v-2.2l3.7 3.5-3.7 3.5v-2.2h-2.5z" fill="#ff0000" stroke="#fff" stroke-width="1.7" stroke-linejoin="round" paint-order="stroke"/>
<path d="M359 281l4.5-4.5v9z" fill="#000" stroke="#fff" stroke-width="1"/>
<path d="M360.55 264.2h2.5v-2.2l3.7 3.5-3.7 3.5v-2.2h-2.5z" fill="#0000ff" stroke="#fff" stroke-width="1.7" stroke-linejoin="round" paint-order="stroke"/>
<path d="M367.8 244.7h2.5v-2.2l3.7 3.5-3.7 3.5v-2.2h-2.5z" fill="#ff0000" stroke="#fff" stroke-width="1.7" stroke-linejoin="round" paint-order="stroke"/>
<path d="M375.55 255.7h2.5v-2.2l3.7 3.5-3.7 3.5v-2.2h-2.5z" fill="#ff0000" stroke="#fff" stroke-width="1.7" stroke-linejoin="round" paint-order="stroke"/>
<path d="M382.8 242.45h2.5v-2.2l3.7 3.5-3.7 3.5v-2.2h-2.5z" fill="#ff0000" stroke="#fff" stroke-width="1.7" stroke-linejoin="round" paint-order="stroke"/>
<path d="M390.55 214.45h2.5v-2.2l3.7 3.5-3.7 3.5v-2.2h-2.5z" fill="#ff0000" stroke="#fff" stroke-width="1.7" stroke-linejoin="round" paint-order="stroke"/>
<path d="M398.8 202.45h2.5v-2.2l3.7 3.5-3.7 3.5v-2.2h-2.5z" fill="#ff0000" stroke="#fff" stroke-width="1.7" stroke-linejoin="round" paint-order="stroke"/>
<path d="M403.5 203.75l4.5-4.5v9z" fill="#000" stroke="#fff" stroke-width="1"/>
<path d="M406.3 193.7h2.5v-2.2l3.7 3.5-3.7 3.5v-2.2h-2.5z" fill="#0000ff" stroke="#fff" stroke-width="1.7" stroke-linejoin="round" paint-order="stroke"/>
<path d="M413.8 202.45h2.5v-2.2l3.7 3.5-3.7 3.5v-2.2h-2.5z" fill="#0000ff" stroke="#fff" stroke-width="1.7" stroke-linejoin="round" paint-order="stroke"/>
<path d="M420.55 193.7h2.5v-2.2l3.7 3.5-3.7 3.5v-2.2h-2.5z" fill="#ff0000" stroke="#fff" stroke-width="1.7" stroke-linejoin="round" paint-order="stroke"/>
<path d="M428.05 198.7h2.5v-2.2l3.7 3.5-3.7 3.5v-2.2h-2.5z" fill="#ff0000" stroke="#fff" stroke-width="1.7" stroke-linejoin="round" paint-order="stroke"/>
<path d="M435.55 198.7h2.5v-2.2l3.7 3.5-3.7 3.5v-2.2h-2.5z" fill="#ff0000" stroke="#fff" stroke-width="1.7" stroke-linejoin="round" paint-order="stroke"/>
<path d="M443.05 194.95h2.5v-2.2l3.7 3.5-3.7 3.5v-2.2h-2.5z" fill="#ff0000" stroke="#fff" stroke-width="1.7" stroke-linejoin="round" paint-order="stroke"/>
<path d="M450.55 191.2h2.5v-2.2l3.7 3.5-3.7 3.5v-2.2h-2.5z" fill="#ff0000" stroke="#fff" stroke-width="1.7" stroke-linejoin="round" paint-order="stroke"/>
<path d="M458.05 184.95h2.5v-2.2l3.7 3.5-3.7 3.5v-2.2h-2.5z" fill="#ff0000" stroke="#fff" stroke-width="1.7" stroke-linejoin="round" paint-order="stroke"/>
<path d="M465.55 181.2h2.5v-2.2l3.7 3.5-3.7 3.5v-2.2h-2.5z" fill="#ff0000" stroke="#fff" stroke-width="1.7" stroke-linejoin="round" paint-order="stroke"/>
<path d="M473.05 124.95h2.5v-2.2l3.7 3.5-3.7 3.5v-2.2h-2.5z" fill="#ff0000" stroke="#fff" stroke-width="1.7" stroke-linejoin="round" paint-order="stroke"/>
<path d="M477.75 126.25l4.5-4.5v9z" fill="#000" stroke="#fff" stroke-width="1"/>
<path d="M480.55 129.95h2.5v-2.2l3.7 3.5-3.7 3.5v-2.2h-2.5z" fill="#0000ff" stroke="#fff" stroke-width="1.7" stroke-linejoin="round" paint-order="stroke"/>
<path d="M488.05 124.2h2.5v-2.2l3.7 3.5-3.7 3.5v-2.2h-2.5z" fill="#ff0000" stroke="#fff" stroke-width="1.7" stroke-linejoin="round" paint-order="stroke"/>
<path d="M496.3 127.45h2.5v-2.2l3.7 3.5-3.7 3.5v-2.2h-2.5z" fill="#ff0000" stroke="#fff" stroke-width="1.7" stroke-linejoin="round" paint-order="stroke"/>
<path d="M503.05 161.2h2.5v-2.2l3.7 3.5-3.7 3.5v-2.2h-2.5z" fill="#0000ff" stroke="#fff" stroke-width="1.7" stroke-linejoin="round" paint-order="stroke"/>
<path d="M507.75 162.5l4.5-4.5v9z" fill="#000" stroke="#fff" stroke-width="1"/>
<path d="M510.55 168.2h2.5v-2.2l3.7 3.5-3.7 3.5v-2.2h-2.5z" fill="#0000ff" stroke="#fff" stroke-width="1.7" stroke-linejoin="round" paint-order="stroke"/>
<path d="M525.55 175.7h2.5v-2.2l3.7 3.5-3.7 3.5v-2.2h-2.5z" fill="#0000ff" stroke="#fff" stroke-width="1.7" stroke-linejoin="round" paint-order="stroke"/>
<path d="M518.05 195.7h2.5v-2.2l3.7 3.5-3.7 3.5v-2.2h-2.5z" fill="#0000ff" stroke="#fff" stroke-width="1.7" stroke-linejoin="round" paint-order="stroke"/>
<path d="M533.05 150.7h2.5v-2.2l3.7 3.5-3.7 3.5v-2.2h-2.5z" fill="#ff0000" stroke="#fff" stroke-width="1.7" stroke-linejoin="round" paint-order="stroke"/>
<path d="M537.75 152l4.5-4.5v9z" fill="#000" stroke="#fff" stroke-width="1"/>
<path d="M540.55 141.2h2.5v-2.2l3.7 3.5-3.7 3.5v-2.2h-2.5z" fill="#0000ff" stroke="#fff" stroke-width="1.7" stroke-linejoin="round" paint-order="stroke"/>
<path d="M548.05 173.2h2.5v-2.2l3.7 3.5-3.7 3.5v-2.2h-2.5z" fill="#0000ff" stroke="#fff" stroke-width="1.7" stroke-linejoin="round" paint-order="stroke"/>
<path d="M552.75 174.5l4.5-4.5v9z" fill="#000" stroke="#fff" stroke-width="1"/>
<path d="M555.55 193.7h2.5v-2.2l3.7 3.5-3.7 3.5v-2.2h-2.5z" fill="#0000ff" stroke="#fff" stroke-width="1.7" stroke-linejoin="round" paint-order="stroke"/>
<path d="M563.05 193.2h2.5v-2.2l3.7 3.5-3.7 3.5v-2.2h-2.5z" fill="#0000ff" stroke="#fff" stroke-width="1.7" stroke-linejoin="round" paint-order="stroke"/>
<path d="M570.55 212.45h2.5v-2.2l3.7 3.5-3.7 3.5v-2.2h-2.5z" fill="#0000ff" stroke="#fff" stroke-width="1.7" stroke-linejoin="round" paint-order="stroke"/>
<path d="M578.8 202.45h2.5v-2.2l3.7 3.5-3.7 3.5v-2.2h-2.5z" fill="#0000ff" stroke="#fff" stroke-width="1.7" stroke-linejoin="round" paint-order="stroke"/>
<path d="M586.3 206.2h2.5v-2.2l3.7 3.5-3.7 3.5v-2.2h-2.5z" fill="#0000ff" stroke="#fff" stroke-width="1.7" stroke-linejoin="round" paint-order="stroke"/>
<path d="M593.05 174.95h2.5v-2.2l3.7 3.5-3.7 3.5v-2.2h-2.5z" fill="#ff0000" stroke="#fff" stroke-width="1.7" stroke-linejoin="round" paint-order="stroke"/>
<path d="M597.75 176.25l4.5-4.5v9z" fill="#000" stroke="#fff" stroke-width="1"/>
<path d="M600.55 166.2h2.5v-2.2l3.7 3.5-3.7 3.5v-2.2h-2.5z" fill="#0000ff" stroke="#fff" stroke-width="1.7" stroke-linejoin="round" paint-order="stroke"/>
<path d="M608.05 187.2h2.5v-2.2l3.7 3.5-3.7 3.5v-2.2h-2.5z" fill="#0000ff" stroke="#fff" stroke-width="1.7" stroke-linejoin="round" paint-order="stroke"/>
<path d="M638.05 198.2h2.5v-2.2l3.7 3.5-3.7 3.5v-2.2h-2.5z" fill="#0000ff" stroke="#fff" stroke-width="1.7" stroke-linejoin="round" paint-order="stroke"/>
<path d="M623.05 208.7h2.5v-2.2l3.7 3.5-3.7 3.5v-2.2h-2.5z" fill="#0000ff" stroke="#fff" stroke-width="1.7" stroke-linejoin="round" paint-order="stroke"/>
<path d="M615.55 223.2h2.5v-2.2l3.7 3.5-3.7 3.5v-2.2h-2.5z" fill="#0000ff" stroke="#fff" stroke-width="1.7" stroke-linejoin="round" paint-order="stroke"/>
<path d="M620.25 224.5l4.5-4.5v9z" fill="#000" stroke="#fff" stroke-width="1"/>
<path d="M630.55 222.45h2.5v-2.2l3.7 3.5-3.7 3.5v-2.2h-2.5z" fill="#0000ff" stroke="#fff" stroke-width="1.7" stroke-linejoin="round" paint-order="stroke"/>
<path d="M645.55 222.45h2.5v-2.2l3.7 3.5-3.7 3.5v-2.2h-2.5z" fill="#0000ff" stroke="#fff" stroke-width="1.7" stroke-linejoin="round" paint-order="stroke"/>
<path d="M653.8 223.7h2.5v-2.2l3.7 3.5-3.7 3.5v-2.2h-2.5z" fill="#0000ff" stroke="#fff" stroke-width="1.7" stroke-linejoin="round" paint-order="stroke"/>
<path d="M664.3 207.45h2.5v-2.2l3.7 3.5-3.7 3.5v-2.2h-2.5z" fill="#0000ff" stroke="#fff" stroke-width="1.7" stroke-linejoin="round" paint-order="stroke"/>
<path d="M669 208.75l4.5-4.5v9z" fill="#000" stroke="#fff" stroke-width="1"/>
<path d="M668.05 189.95h2.5v-2.2l3.7 3.5-3.7 3.5v-2.2h-2.5z" fill="#0000ff" stroke="#fff" stroke-width="1.7" stroke-linejoin="round" paint-order="stroke"/>
<path d="M676.3 184.95h2.5v-2.2l3.7 3.5-3.7 3.5v-2.2h-2.5z" fill="#ff0000" stroke="#fff" stroke-width="1.7" stroke-linejoin="round" paint-order="stroke"/>
<path d="M690.55 168.2h2.5v-2.2l3.7 3.5-3.7 3.5v-2.2h-2.5z" fill="#ff0000" stroke="#fff" stroke-width="1.7" stroke-linejoin="round" paint-order="stroke"/>
<path d="M699.3 214.2h2.5v-2.2l3.7 3.5-3.7 3.5v-2.2h-2.5z" fill="#0000ff" stroke="#fff" stroke-width="1.7" stroke-linejoin="round" paint-order="stroke"/>
<path d="M704 215.5l4.5-4.5v9z" fill="#000" stroke="#fff" stroke-width="1"/>
<path d="M705.55 233.2h2.5v-2.2l3.7 3.5-3.7 3.5v-2.2h-2.5z" fill="#0000ff" stroke="#fff" stroke-width="1.7" stroke-linejoin="round" paint-order="stroke"/>
<path d="M713.05 236.7h2.5v-2.2l3.7 3.5-3.7 3.5v-2.2h-2.5z" fill="#0000ff" stroke="#fff" stroke-width="1.7" stroke-linejoin="round" paint-order="stroke"/>
<path d="M720.55 262.45h2.5v-2.2l3.7 3.5-3.7 3.5v-2.2h-2.5z" fill="#0000ff" stroke="#fff" stroke-width="1.7" stroke-linejoin="round" paint-order="stroke"/>
<path d="M728.05 271.2h2.5v-2.2l3.7 3.5-3.7 3.5v-2.2h-2.5z" fill="#0000ff" stroke="#fff" stroke-width="1.7" stroke-linejoin="round" paint-order="stroke"/>
<path d="M735.55 263.2h2.5v-2.2l3.7 3.5-3.7 3.5v-2.2h-2.5z" fill="#0000ff" stroke="#fff" stroke-width="1.7" stroke-linejoin="round" paint-order="stroke"/>
<path d="M743.05 278.7h2.5v-2.2l3.7 3.5-3.7 3.5v-2.2h-2.5z" fill="#0000ff" stroke="#fff" stroke-width="1.7" stroke-linejoin="round" paint-order="stroke"/>
<path d="M750.55 278.2h2.5v-2.2l3.7 3.5-3.7 3.5v-2.2h-2.5z" fill="#0000ff" stroke="#fff" stroke-width="1.7" stroke-linejoin="round" paint-order="stroke"/>
<path d="M766.3 263.7h2.5v-2.2l3.7 3.5-3.7 3.5v-2.2h-2.5z" fill="#ff0000" stroke="#fff" stroke-width="1.7" stroke-linejoin="round" paint-order="stroke"/>
<path d="M767 262.5l5 5m0-5l-5 5" stroke="#ff0000" stroke-width="1.2" fill="none"/>
<path d="M773.8 263.7h2.5v-2.2l3.7 3.5-3.7 3.5v-2.2h-2.5z" fill="#0000ff" stroke="#fff" stroke-width="1.7" stroke-linejoin="round" paint-order="stroke"/>
<path d="M788.05 284.95h2.5v-2.2l3.7 3.5-3.7 3.5v-2.2h-2.5z" fill="#0000ff" stroke="#fff" stroke-width="1.7" stroke-linejoin="round" paint-order="stroke"/>
<path d="M796.05 287.95h2.5v-2.2l3.7 3.5-3.7 3.5v-2.2h-2.5z" fill="#0000ff" stroke="#fff" stroke-width="1.7" stroke-linejoin="round" paint-order="stroke"/>
<path d="M758.8 314.45h2.5v-2.2l3.7 3.5-3.7 3.5v-2.2h-2.5z" fill="#0000ff" stroke="#fff" stroke-width="1.7" stroke-linejoin="round" paint-order="stroke"/>
<path d="M763.5 315.75l4.5-4.5v9z" fill="#000" stroke="#fff" stroke-width="1"/>
<path d="M781.3 308.2h2.5v-2.2l3.7 3.5-3.7 3.5v-2.2h-2.5z" fill="#0000ff" stroke="#fff" stroke-width="1.7" stroke-linejoin="round" paint-order="stroke"/>
<path d="M803.05 308.2h2.5v-2.2l3.7 3.5-3.7 3.5v-2.2h-2.5z" fill="#0000ff" stroke="#fff" stroke-width="1.7" stroke-linejoin="round" paint-order="stroke"/>
<path d="M818.05 334.95h2.5v-2.2l3.7 3.5-3.7 3.5v-2.2h-2.5z" fill="#0000ff" stroke="#fff" stroke-width="1.7" stroke-linejoin="round" paint-order="stroke"/>
<path d="M825.55 339.95h2.5v-2.2l3.7 3.5-3.7 3.5v-2.2h-2.5z" fill="#0000ff" stroke="#fff" stroke-width="1.7" stroke-linejoin="round" paint-order="stroke"/>
<path d="M833.05 334.95h2.5v-2.2l3.7 3.5-3.7 3.5v-2.2h-2.5z" fill="#0000ff" stroke="#fff" stroke-width="1.7" stroke-linejoin="round" paint-order="stroke"/>
<path d="M840.55 338.7h2.5v-2.2l3.7 3.5-3.7 3.5v-2.2h-2.5z" fill="#0000ff" stroke="#fff" stroke-width="1.7" stroke-linejoin="round" paint-order="stroke"/>
<path d="M856.3 323.2h2.5v-2.2l3.7 3.5-3.7 3.5v-2.2h-2.5z" fill="#ff0000" stroke="#fff" stroke-width="1.7" stroke-linejoin="round" paint-order="stroke"/>
<path d="M861 324.5l4.5-4.5v9z" fill="#000" stroke="#fff" stroke-width="1"/>
<path d="M871.8 337.45h2.5v-2.2l3.7 3.5-3.7 3.5v-2.2h-2.5z" fill="#0000ff" stroke="#fff" stroke-width="1.7" stroke-linejoin="round" paint-order="stroke"/>
<path d="M876.5 338.75l4.5-4.5v9z" fill="#000" stroke="#fff" stroke-width="1"/>
<path d="M811.6 365.2h2.5v-2.2l3.7 3.5-3.7 3.5v-2.2h-2.5z" fill="#0000ff" stroke="#fff" stroke-width="1.7" stroke-linejoin="round" paint-order="stroke"/>
<path d="M816.3 366.5l4.5-4.5v9z" fill="#000" stroke="#fff" stroke-width="1"/>
<path d="M848.2 367.1h2.5v-2.2l3.7 3.5-3.7 3.5v-2.2h-2.5z" fill="#0000ff" stroke="#fff" stroke-width="1.7" stroke-linejoin="round" paint-order="stroke"/>
<path d="M863.05 289.95h2.5v-2.2l3.7 3.5-3.7 3.5v-2.2h-2.5z" fill="#0000ff" stroke="#fff" stroke-width="1.7" stroke-linejoin="round" paint-order="stroke"/>
<path d="M878.8 283.2h2.5v-2.2l3.7 3.5-3.7 3.5v-2.2h-2.5z" fill="#ff0000" stroke="#fff" stroke-width="1.7" stroke-linejoin="round" paint-order="stroke"/>
<path d="M883.5 284.5l4.5-4.5v9z" fill="#000" stroke="#fff" stroke-width="1"/>
<path d="M893.05 286.2h2.5v-2.2l3.7 3.5-3.7 3.5v-2.2h-2.5z" fill="#0000ff" stroke="#fff" stroke-width="1.7" stroke-linejoin="round" paint-order="stroke"/>
<path d="M886.05 251.7h2.5v-2.2l3.7 3.5-3.7 3.5v-2.2h-2.5z" fill="#0000ff" stroke="#fff" stroke-width="1.7" stroke-linejoin="round" paint-order="stroke"/>
<path d="M900.55 243.2h2.5v-2.2l3.7 3.5-3.7 3.5v-2.2h-2.5z" fill="#ff0000" stroke="#fff" stroke-width="1.7" stroke-linejoin="round" paint-order="stroke"/>
<path d="M915.55 238.2h2.5v-2.2l3.7 3.5-3.7 3.5v-2.2h-2.5z" fill="#ff0000" stroke="#fff" stroke-width="1.7" stroke-linejoin="round" paint-order="stroke"/>
<path d="M920.25 239.5l4.5-4.5v9z" fill="#000" stroke="#fff" stroke-width="1"/>
<path d="M923.05 244.2h2.5v-2.2l3.7 3.5-3.7 3.5v-2.2h-2.5z" fill="#0000ff" stroke="#fff" stroke-width="1.7" stroke-linejoin="round" paint-order="stroke"/>
<path d="M930.55 256.7h2.5v-2.2l3.7 3.5-3.7 3.5v-2.2h-2.5z" fill="#0000ff" stroke="#fff" stroke-width="1.7" stroke-linejoin="round" paint-order="stroke"/>
<path d="M945.55 270.7h2.5v-2.2l3.7 3.5-3.7 3.5v-2.2h-2.5z" fill="#0000ff" stroke="#fff" stroke-width="1.7" stroke-linejoin="round" paint-order="stroke"/>
<path d="M953.05 268.7h2.5v-2.2l3.7 3.5-3.7 3.5v-2.2h-2.5z" fill="#0000ff" stroke="#fff" stroke-width="1.7" stroke-linejoin="round" paint-order="stroke"/>
<path d="M960.55 253.7h2.5v-2.2l3.7 3.5-3.7 3.5v-2.2h-2.5z" fill="#ff0000" stroke="#fff" stroke-width="1.7" stroke-linejoin="round" paint-order="stroke"/>
<path d="M968.05 239.95h2.5v-2.2l3.7 3.5-3.7 3.5v-2.2h-2.5z" fill="#ff0000" stroke="#fff" stroke-width="1.7" stroke-linejoin="round" paint-order="stroke"/>
<path d="M972.75 241.25l4.5-4.5v9z" fill="#000" stroke="#fff" stroke-width="1"/>
<path d="M975.55 251.7h2.5v-2.2l3.7 3.5-3.7 3.5v-2.2h-2.5z" fill="#0000ff" stroke="#fff" stroke-width="1.7" stroke-linejoin="round" paint-order="stroke"/>
<path d="M990.55 242.45h2.5v-2.2l3.7 3.5-3.7 3.5v-2.2h-2.5z" fill="#ff0000" stroke="#fff" stroke-width="1.7" stroke-linejoin="round" paint-order="stroke"/>
<path d="M1013.05 272.45h2.5v-2.2l3.7 3.5-3.7 3.5v-2.2h-2.5z" fill="#0000ff" stroke="#fff" stroke-width="1.7" stroke-linejoin="round" paint-order="stroke"/>
<path d="M1021.05 276.2h2.5v-2.2l3.7 3.5-3.7 3.5v-2.2h-2.5z" fill="#0000ff" stroke="#fff" stroke-width="1.7" stroke-linejoin="round" paint-order="stroke"/>
<path d="M1025.75 277.5l4.5-4.5v9z" fill="#000" stroke="#fff" stroke-width="1"/>
<path d="M1029.3 243.2h2.5v-2.2l3.7 3.5-3.7 3.5v-2.2h-2.5z" fill="#ff0000" stroke="#fff" stroke-width="1.7" stroke-linejoin="round" paint-order="stroke"/>
<path d="M1034 244.5l4.5-4.5v9z" fill="#000" stroke="#fff" stroke-width="1"/>
<path d="M1035.55 203.2h2.5v-2.2l3.7 3.5-3.7 3.5v-2.2h-2.5z" fill="#0000ff" stroke="#fff" stroke-width="1.7" stroke-linejoin="round" paint-order="stroke"/>
<path d="M1043.3 180.7h2.5v-2.2l3.7 3.5-3.7 3.5v-2.2h-2.5z" fill="#ff0000" stroke="#fff" stroke-width="1.7" stroke-linejoin="round" paint-order="stroke"/>
<path d="M1051.05 158.7h2.5v-2.2l3.7 3.5-3.7 3.5v-2.2h-2.5z" fill="#ff0000" stroke="#fff" stroke-width="1.7" stroke-linejoin="round" paint-order="stroke"/>
<path d="M1058.05 164.95h2.5v-2.2l3.7 3.5-3.7 3.5v-2.2h-2.5z" fill="#ff0000" stroke="#fff" stroke-width="1.7" stroke-linejoin="round" paint-order="stroke"/>
<path d="M1065.55 153.2h2.5v-2.2l3.7 3.5-3.7 3.5v-2.2h-2.5z" fill="#ff0000" stroke="#fff" stroke-width="1.7" stroke-linejoin="round" paint-order="stroke"/>
<path d="M1073.05 139.95h2.5v-2.2l3.7 3.5-3.7 3.5v-2.2h-2.5z" fill="#ff0000" stroke="#fff" stroke-width="1.7" stroke-linejoin="round" paint-order="stroke"/>
<path d="M1077.75 141.25l4.5-4.5v9z" fill="#000" stroke="#fff" stroke-width="1"/>
<path d="M1080.55 126.7h2.5v-2.2l3.7 3.5-3.7 3.5v-2.2h-2.5z" fill="#0000ff" stroke="#fff" stroke-width="1.7" stroke-linejoin="round" paint-order="stroke"/>
<path d="M1088.05 126.7h2.5v-2.2l3.7 3.5-3.7 3.5v-2.2h-2.5z" fill="#ff0000" stroke="#fff" stroke-width="1.7" stroke-linejoin="round" paint-order="stroke"/>
<path d="M1095.55 138.7h2.5v-2.2l3.7 3.5-3.7 3.5v-2.2h-2.5z" fill="#0000ff" stroke="#fff" stroke-width="1.7" stroke-linejoin="round" paint-order="stroke"/>
<path d="M1103.05 137.45h2.5v-2.2l3.7 3.5-3.7 3.5v-2.2h-2.5z" fill="#ff0000" stroke="#fff" stroke-width="1.7" stroke-linejoin="round" paint-order="stroke"/>
<path d="M1110.55 151.2h2.5v-2.2l3.7 3.5-3.7 3.5v-2.2h-2.5z" fill="#0000ff" stroke="#fff" stroke-width="1.7" stroke-linejoin="round" paint-order="stroke"/>
<path d="M1111.25 150l5 5m0-5l-5 5" stroke="#ff0000" stroke-width="1.2" fill="none"/>
<path d="M1118.8 153.2h2.5v-2.2l3.7 3.5-3.7 3.5v-2.2h-2.5z" fill="#0000ff" stroke="#fff" stroke-width="1.7" stroke-linejoin="round" paint-order="stroke"/>
<path d="M1123.5 154.5l4.5-4.5v9z" fill="#000" stroke="#fff" stroke-width="1"/>
<path d="M1126.3 141.7h2.5v-2.2l3.7 3.5-3.7 3.5v-2.2h-2.5z" fill="#ff0000" stroke="#fff" stroke-width="1.7" stroke-linejoin="round" paint-order="stroke"/>
<path d="M1133.8 168.2h2.5v-2.2l3.7 3.5-3.7 3.5v-2.2h-2.5z" fill="#0000ff" stroke="#fff" stroke-width="1.7" stroke-linejoin="round" paint-order="stroke"/>
<path d="M1140.55 187.45h2.5v-2.2l3.7 3.5-3.7 3.5v-2.2h-2.5z" fill="#0000ff" stroke="#fff" stroke-width="1.7" stroke-linejoin="round" paint-order="stroke"/>
<path d="M1149.3 214.2h2.5v-2.2l3.7 3.5-3.7 3.5v-2.2h-2.5z" fill="#0000ff" stroke="#fff" stroke-width="1.7" stroke-linejoin="round" paint-order="stroke"/>
<path d="M1154 215.5l4.5-4.5v9z" fill="#000" stroke="#fff" stroke-width="1"/>
<path d="M1155.55 182.45h2.5v-2.2l3.7 3.5-3.7 3.5v-2.2h-2.5z" fill="#0000ff" stroke="#fff" stroke-width="1.7" stroke-linejoin="round" paint-order="stroke"/>
<path d="M1163.05 179.2h2.5v-2.2l3.7 3.5-3.7 3.5v-2.2h-2.5z" fill="#0000ff" stroke="#fff" stroke-width="1.7" stroke-linejoin="round" paint-order="stroke"/>
<path d="M1170.55 154.2h2.5v-2.2l3.7 3.5-3.7 3.5v-2.2h-2.5z" fill="#ff0000" stroke="#fff" stroke-width="1.7" stroke-linejoin="round" paint-order="stroke"/>
<path d="M1175.25 155.5l4.5-4.5v9z" fill="#000" stroke="#fff" stroke-width="1"/>
<path d="M1178.05 149.95h2.5v-2.2l3.7 3.5-3.7 3.5v-2.2h-2.5z" fill="#0000ff" stroke="#fff" stroke-width="1.7" stroke-linejoin="round" paint-order="stroke"/>
<path d="M1185.55 168.7h2.5v-2.2l3.7 3.5-3.7 3.5v-2.2h-2.5z" fill="#0000ff" stroke="#fff" stroke-width="1.7" stroke-linejoin="round" paint-order="stroke"/>
<path d="M1193.05 175.7h2.5v-2.2l3.7 3.5-3.7 3.5v-2.2h-2.5z" fill="#0000ff" stroke="#fff" stroke-width="1.7" stroke-linejoin="round" paint-order="stroke"/>
<path d="M1201.8 204.95h2.5v-2.2l3.7 3.5-3.7 3.5v-2.2h-2.5z" fill="#0000ff" stroke="#fff" stroke-width="1.7" stroke-linejoin="round" paint-order="stroke"/>
<path d="M1206.5 206.25l4.5-4.5v9z" fill="#000" stroke="#fff" stroke-width="1"/>
<path d="M1208.05 186.2h2.5v-2.2l3.7 3.5-3.7 3.5v-2.2h-2.5z" fill="#0000ff" stroke="#fff" stroke-width="1.7" stroke-linejoin="round" paint-order="stroke"/>
<path d="M1216.3 164.95h2.5v-2.2l3.7 3.5-3.7 3.5v-2.2h-2.5z" fill="#ff0000" stroke="#fff" stroke-width="1.7" stroke-linejoin="round" paint-order="stroke"/>
<path d="M1221 166.25l4.5-4.5v9z" fill="#000" stroke="#fff" stroke-width="1"/>
</g>
<clipPath id="wm"><rect x="0" y="94" width="1280" height="353"/></clipPath><g clip-path="url(#wm)">
<path d="M156 323L193 360L188 365L156 333L124 365L119 360ZM133 353V389L140 396V346ZM179 353V389L172 396V346ZM140 367.5H152.6V374.5H140ZM172 367.5H159.4V374.5H172ZM152.7 333V407H150L156 413.5L162 407H159.3V333Z" fill="rgba(150,150,150,0.16)"/><text x="156" y="435.5" text-anchor="middle" font-size="15px" font-weight="bold" fill="rgba(150,150,150,0.16)" textLength="93" lengthAdjust="spacingAndGlyphs">YOFOREX</text>
<path d="M492 323L529 360L524 365L492 333L460 365L455 360ZM469 353V389L476 396V346ZM515 353V389L508 396V346ZM476 367.5H488.6V374.5H476ZM508 367.5H495.4V374.5H508ZM488.7 333V407H486L492 413.5L498 407H495.3V333Z" fill="rgba(172,172,172,0.3)"/><text x="492" y="436" text-anchor="middle" font-size="15px" font-weight="bold" fill="rgba(172,172,172,0.14)" textLength="93" lengthAdjust="spacingAndGlyphs">YOFOREX</text>
<path d="M821 337.5L858 374.5L853 379.5L821 347.5L789 379.5L784 374.5ZM798 367.5V403.5L805 410.5V360.5ZM844 367.5V403.5L837 410.5V360.5ZM805 382H817.6V389H805ZM837 382H824.4V389H837ZM817.7 347.5V421.5H815L821 428L827 421.5H824.3V347.5Z" fill="rgba(172,172,172,0.3)"/><text x="821" y="447" text-anchor="middle" font-size="15px" font-weight="bold" fill="rgba(172,172,172,0.3)" textLength="93" lengthAdjust="spacingAndGlyphs">YOFOREX</text>
<path d="M1133 323L1170 360L1165 365L1133 333L1101 365L1096 360ZM1110 353V389L1117 396V346ZM1156 353V389L1149 396V346ZM1117 367.5H1129.6V374.5H1117ZM1149 367.5H1136.4V374.5H1149ZM1129.7 333V407H1127L1133 413.5L1139 407H1136.3V333Z" fill="rgba(172,172,172,0.3)"/><text x="1133" y="436" text-anchor="middle" font-size="15px" font-weight="bold" fill="rgba(172,172,172,0.3)" textLength="93" lengthAdjust="spacingAndGlyphs">YOFOREX</text>
</g>
</svg>
<svg class="a" style="left:0;top:0;pointer-events:none" width="1280" height="720" viewBox="0 0 1280 720" font-family="Liberation Sans, sans-serif">
<g stroke="#cbcbcb" stroke-width="1" stroke-dasharray="3 2.6">
<path d="M49.5 450V579M49.5 582V611"/>
<path d="M79.5 450V579M79.5 582V611"/>
<path d="M109.5 450V579M109.5 582V611"/>
<path d="M139.5 450V579M139.5 582V611"/>
<path d="M169.5 450V579M169.5 582V611"/>
<path d="M199.5 450V579M199.5 582V611"/>
<path d="M229.5 450V579M229.5 582V611"/>
<path d="M259.5 450V579M259.5 582V611"/>
<path d="M289.5 450V579M289.5 582V611"/>
<path d="M319.5 450V579M319.5 582V611"/>
<path d="M349.5 450V579M349.5 582V611"/>
<path d="M379.5 450V579M379.5 582V611"/>
<path d="M409.5 450V579M409.5 582V611"/>
<path d="M439.5 450V579M439.5 582V611"/>
<path d="M469.5 450V579M469.5 582V611"/>
<path d="M499.5 450V579M499.5 582V611"/>
<path d="M529.5 450V579M529.5 582V611"/>
<path d="M559.5 450V579M559.5 582V611"/>
<path d="M589.5 450V579M589.5 582V611"/>
<path d="M619.5 450V579M619.5 582V611"/>
<path d="M649.5 450V579M649.5 582V611"/>
<path d="M679.5 450V579M679.5 582V611"/>
<path d="M709.5 450V579M709.5 582V611"/>
<path d="M739.5 450V579M739.5 582V611"/>
<path d="M769.5 450V579M769.5 582V611"/>
<path d="M799.5 450V579M799.5 582V611"/>
<path d="M829.5 450V579M829.5 582V611"/>
<path d="M859.5 450V579M859.5 582V611"/>
<path d="M889.5 450V579M889.5 582V611"/>
<path d="M919.5 450V579M919.5 582V611"/>
<path d="M949.5 450V579M949.5 582V611"/>
<path d="M979.5 450V579M979.5 582V611"/>
<path d="M1009.5 450V579M1009.5 582V611"/>
<path d="M1039.5 450V579M1039.5 582V611"/>
<path d="M1069.5 450V579M1069.5 582V611"/>
<path d="M1099.5 450V579M1099.5 582V611"/>
<path d="M1129.5 450V579M1129.5 582V611"/>
<path d="M1159.5 450V579M1159.5 582V611"/>
<path d="M1189.5 450V579M1189.5 582V611"/>
<path d="M1219.5 450V579M1219.5 582V611"/>
<path d="M542 458.5H1231"/>
<path d="M20 488.5H1231"/>
<path d="M20 518.5H1231"/>
<path d="M20 548.5H1231"/>
</g>
<rect x="453.5" y="450.5" width="168" height="30" fill="rgba(255,255,255,0.75)" stroke="#e4e4e4"/>
<path d="M455 482H623V452" fill="none" stroke="#ededed" stroke-width="2"/>
<text x="459" y="463" font-size="11px" fill="#d0d0d0" textLength="156" lengthAdjust="spacingAndGlyphs">Great Britain Pound vs US Dollar</text>
<text x="459" y="476.5" font-size="11px" fill="#cacaca" textLength="133" lengthAdjust="spacingAndGlyphs">1576 bars, last price 1.34461</text>
<path d="M141 565L141.5 563L155 563L156 562L153.5 562L154.5 573.5L158.5 573.5L159.5 562L175 562M88 566L88.5 569L89 566M137 565L137.5 567.5L138.5 565M25 570L26 572L27 570M262.5 557.5L264 558L265 571L266 571.5L267 557L268.5 555L288 555M330 553L333.75 558L336 553M355.5 553L358.75 559.5L361 552L373 552M406 551.5L407 553L408 551.5M448 550L449 551.5L450 550M468 549.5L469 550.5L471 549.5M525 546.5L526 548L527 546M582 544.5L583 546L584 544.5M594 544L596.25 547.5L597.5 541.5L612 540.5M655 538L657 540.5L658 538M668 537L670 538.5L672 537M737 535L738.5 541L740 542.5L742 542.5L743.5 535L745 530L770 530M816 524.5L817 530.5L818 532.5L820.5 532.5L821.25 513L823 512L836 512M886 510L887.5 513.5L888.5 510M868 511.5L869 512.5L870 511.5M986 502.5L987.5 505L989 502M1018 500L1019 502L1020 500M1058 499L1059 501L1060 498M1065 497.5L1075 498.5M1086 495.5L1088 498L1090 504L1092 517L1093 535L1095.5 535L1096.5 505L1096.75 484L1126 483.5M1145 483L1147 485.5L1150 488L1152 488L1153.5 482M1156 480.5L1170 481M1196 480L1197 483L1198 480M1205 479.5L1225 480" fill="none" stroke="#20c020" stroke-width="1.1"/>
<path d="M19.5 570.75L42.5 568.25L67.5 567L110 565.5L136.25 565L141.25 561.25L155 561.75L162.5 557L167.5 558L173.75 561.25L185 560.5L232.5 558.75L237.5 557.5L262.5 557.5L268.75 552.5L273.75 545.75L277.5 547L282.5 552L288.75 554.5L310 554.5L330 553.25L338.75 551.25L347.5 553L357.5 552.5L363.75 549L373.75 551.75L395 551.75L435 550L470 549.25L495 548L515 547.5L530 545.5L570 545.25L590 544L596.25 544L600 539.5L606.25 538L613.75 539.5L640 539L655 538L675 536.25L705 535.75L737.5 534.5L742.5 532.5L745 528.75L751.25 527L760 529.25L770 529.5L777.5 526.5L790 526.5L795 524.5L817.5 524.25L821.25 520L825 512.5L829.25 508.75L835 511.25L855 511.5L887.5 510L891.25 507.5L905 507.5L925 505.75L950 504.25L955 503.25L980 502.5L1022.5 499.5L1057.5 499.25L1065 495L1075 497L1082.5 495L1096.25 494.5L1098 482.5L1100.5 463.75L1106.25 462L1111.25 471.25L1117.5 477.5L1126.25 482.5L1140 482L1152.5 481.75L1156.25 478.25L1165 479L1170 480.5L1197.5 479.5L1201.25 478L1212.5 477.5L1217.5 478.75L1230 479" fill="none" stroke="#0000b8" stroke-width="2.1" stroke-linejoin="round"/>
<path d="M1097 611V585l1 6 1 5 2 5 2 4 3 3 4 2.5 3 0.5zM266 611v-6l2.5 1.5 2 2 2.5 2.5zM745 611v-4l2 1.5 3 2.5zM596 611v-2.5l2 2.5zM1150 611v-2l1.5 2zM158 611v-1.5l1.5 1.5zM360 611v-1.5l1.5 1.5zM820 611v-2l1.5 2zM1028 611v-1.5l1 1.5z" fill="#20b020"/>
<g fill="none" stroke="#000" shape-rendering="crispEdges"><rect x="19.5" y="449.5" width="1212" height="130"/><rect x="19.5" y="581.5" width="1212" height="30"/></g>
<path d="M20 580.5H1231" stroke="#808080" shape-rendering="crispEdges"/>
<g stroke="#000" shape-rendering="crispEdges">
<path d="M49.5 612v2"/>
<path d="M79.5 612v2"/>
<path d="M109.5 612v2"/>
<path d="M139.5 612v2"/>
<path d="M169.5 612v2"/>
<path d="M199.5 612v2"/>
<path d="M229.5 612v2"/>
<path d="M259.5 612v2"/>
<path d="M289.5 612v2"/>
<path d="M319.5 612v2"/>
<path d="M349.5 612v2"/>
<path d="M379.5 612v2"/>
<path d="M409.5 612v2"/>
<path d="M439.5 612v2"/>
<path d="M469.5 612v2"/>
<path d="M499.5 612v2"/>
<path d="M529.5 612v2"/>
<path d="M559.5 612v2"/>
<path d="M589.5 612v2"/>
<path d="M619.5 612v2"/>
<path d="M649.5 612v2"/>
<path d="M679.5 612v2"/>
<path d="M709.5 612v2"/>
<path d="M739.5 612v2"/>
<path d="M769.5 612v2"/>
<path d="M799.5 612v2"/>
<path d="M829.5 612v2"/>
<path d="M859.5 612v2"/>
<path d="M889.5 612v2"/>
<path d="M919.5 612v2"/>
<path d="M949.5 612v2"/>
<path d="M979.5 612v2"/>
<path d="M1009.5 612v2"/>
<path d="M1039.5 612v2"/>
<path d="M1069.5 612v2"/>
<path d="M1099.5 612v2"/>
<path d="M1129.5 612v2"/>
<path d="M1159.5 612v2"/>
<path d="M1189.5 612v2"/>
<path d="M1219.5 612v2"/>
<path d="M1232 458.5h2"/>
<path d="M1232 488.5h2"/>
<path d="M1232 518.5h2"/>
<path d="M1232 548.5h2"/>
<path d="M1232 578.5h2"/>
</g>
<g font-size="9.5px" fill="#000">
<text x="1236" y="462" textLength="24" lengthAdjust="spacingAndGlyphs">31508</text>
<text x="1236" y="492" textLength="24" lengthAdjust="spacingAndGlyphs">25730</text>
<text x="1236" y="522" textLength="24" lengthAdjust="spacingAndGlyphs">19952</text>
<text x="1236" y="552" textLength="24" lengthAdjust="spacingAndGlyphs">14175</text>
<text x="1236" y="582" textLength="19.2" lengthAdjust="spacingAndGlyphs">8397</text>
<text x="20" y="622">0</text>
<text x="49" y="622" text-anchor="end">37</text>
<text x="79" y="622" text-anchor="end">71</text>
<text x="109" y="622" text-anchor="end">104</text>
<text x="139" y="622" text-anchor="end">137</text>
<text x="169" y="622" text-anchor="end">170</text>
<text x="199" y="622" text-anchor="end">203</text>
<text x="229" y="622" text-anchor="end">236</text>
<text x="259" y="622" text-anchor="end">270</text>
<text x="289" y="622" text-anchor="end">303</text>
<text x="319" y="622" text-anchor="end">336</text>
<text x="349" y="622" text-anchor="end">369</text>
<text x="379" y="622" text-anchor="end">402</text>
<text x="409" y="622" text-anchor="end">436</text>
<text x="439" y="622" text-anchor="end">469</text>
<text x="469" y="622" text-anchor="end">502</text>
<text x="499" y="622" text-anchor="end">535</text>
<text x="529" y="622" text-anchor="end">568</text>
<text x="559" y="622" text-anchor="end">602</text>
<text x="589" y="622" text-anchor="end">635</text>
<text x="619" y="622" text-anchor="end">668</text>
<text x="649" y="622" text-anchor="end">701</text>
<text x="679" y="622" text-anchor="end">734</text>
<text x="709" y="622" text-anchor="end">767</text>
<text x="739" y="622" text-anchor="end">801</text>
<text x="769" y="622" text-anchor="end">834</text>
<text x="799" y="622" text-anchor="end">867</text>
<text x="829" y="622" text-anchor="end">900</text>
<text x="859" y="622" text-anchor="end">933</text>
<text x="889" y="622" text-anchor="end">967</text>
<text x="919" y="622" text-anchor="end">1000</text>
<text x="949" y="622" text-anchor="end">1033</text>
<text x="979" y="622" text-anchor="end">1066</text>
<text x="1009" y="622" text-anchor="end">1099</text>
<text x="1039" y="622" text-anchor="end">1133</text>
<text x="1069" y="622" text-anchor="end">1166</text>
<text x="1099" y="622" text-anchor="end">1199</text>
<text x="1129" y="622" text-anchor="end">1232</text>
<text x="1159" y="622" text-anchor="end">1265</text>
<text x="1189" y="622" text-anchor="end">1298</text>
<text x="1219" y="622" text-anchor="end">1332</text>
<text x="22.5" y="593" textLength="15.8" lengthAdjust="spacingAndGlyphs">Size</text>
</g>
<g font-size="9px"><text x="22" y="460" fill="#0000c8" textLength="29" lengthAdjust="spacingAndGlyphs">Balance</text><text x="54.5" y="460">/</text><text x="61.5" y="460" fill="#20b020" textLength="23.5" lengthAdjust="spacingAndGlyphs">Equity</text><text x="88.5" y="460">/</text><text x="95" y="460" fill="#ff2020" textLength="446" lengthAdjust="spacingAndGlyphs">Open prices only (fastest method to analyze the bar just completed, only for EAs that explicitly control bar opening)</text></g>
<clipPath id="tc"><rect x="0" y="440" width="20" height="185"/></clipPath><g clip-path="url(#tc)"><text transform="translate(10.5,647) rotate(-90)" font-size="11px" fill="#000">Tester</text></g>
</svg>
</body></html>
